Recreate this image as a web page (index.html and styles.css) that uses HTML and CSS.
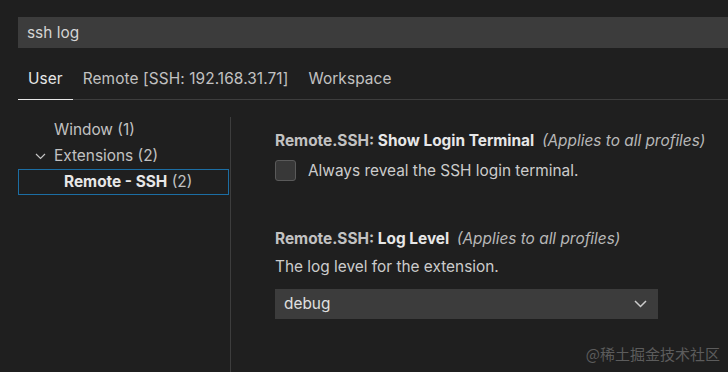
FILE: index.html
```html
<!DOCTYPE html>
<html lang="en">
<head>
<meta charset="UTF-8">
<title>Settings</title>
<link rel="stylesheet" href="styles.css">
</head>
<body>

<div class="search">ssh log</div>

<div class="tabs">
  <div class="tab active">User</div>
  <div class="tab">Remote [SSH: 192.168.31.71]</div>
  <div class="tab">Workspace</div>
</div>

<div class="body">
  <div class="tree">
    <div class="row lvl1">Window (1)</div>
    <div class="row lvl1">
      <svg class="chev" width="11" height="7" viewBox="0 0 11 7"><path d="M1 1l4.5 4.5L10 1" fill="none" stroke="#c5c5c5" stroke-width="1.2"/></svg>
      Extensions (2)
    </div>
    <div class="row lvl2 selected"><b>Remote - SSH</b>&nbsp;(2)</div>
  </div>

  <div class="main">
    <div class="setting">
      <div class="title"><span class="cat">Remote.SSH:</span> Show Login Terminal <i>(Applies to all profiles)</i></div>
      <div class="check-row">
        <span class="checkbox"></span>
        <span>Always reveal the SSH login terminal.</span>
      </div>
    </div>

    <div class="setting second">
      <div class="title"><span class="cat">Remote.SSH:</span> Log Level <i>(Applies to all profiles)</i></div>
      <div class="desc">The log level for the extension.</div>
      <div class="select">
        <span>debug</span>
        <svg width="13" height="8" viewBox="0 0 13 8"><path d="M1 1l5.5 5.5L12 1" fill="none" stroke="#cccccc" stroke-width="1.5"/></svg>
      </div>
    </div>
  </div>
</div>

<div class="mark">@稀土掘金技术社区</div>

</body>
</html>
```

FILE: styles.css
```css
body {
    margin:0;
    background:#1f1f1f;
    color:#cccccc;
    font-family: Inter, "Noto Sans", sans-serif;
    font-size:15.4px;
    line-height:20px;
    height:372px;
    overflow:hidden;
    position:relative;
}

.search {
    margin:17px 0 0 18px;
    height:31px;
    line-height:31px;
    background:#3c3c3c;
    padding-left:9px;
    color:#d4d4d4;
}

.tabs {
    display:flex;
    margin:12px 0 0 18px;
    border-bottom:1px solid #3d3d3d;
    height:39px;
}
.tab {
    padding:0 10px;
    line-height:38px;
    color:#c2c2c2;
    letter-spacing:0.1px;
}
.tab.active {
    color:#e7e7e7;
    border-bottom:1px solid #e7e7e7;
    margin-bottom:-1px;
}

.body {
    display:flex;
    margin-top:17px;
}
.tree {
    width:212px;
    margin-left:18px;
    border-right:1px solid #3d3d3d;
    height:260px;
}
.row {
    height:26px;
    display:flex;
    align-items:center;
    color:#c2c2c2;
    box-sizing:border-box;
}
.lvl1 { padding-left:36px; position:relative; }
.chev { position:absolute; left:17px; top:10px; }
.lvl2 { padding-left:45px; }
.row b { color:#e7e7e7; }
.selected {
    border:1px solid #1c6ea4;
    margin-right:1px;
    padding-left:45px;
}

.main {
    padding-left:44px;
    padding-top:14px;
}
.title {
    font-weight:bold;
    color:#e7e7e7;
}
.title .cat { color:#c2c2c2; }
.title i {
    font-weight:normal;
    color:#b8b8b8;
    margin-left:4px;
}
.check-row {
    display:flex;
    align-items:center;
    margin-top:9px;
}
.checkbox {
    width:21px;
    height:21px;
    background:#383838;
    border:1px solid #5a5a5a;
    border-radius:3px;
    margin-right:12px;
    box-sizing:border-box;
}
.second { margin-top:48px; }
.desc { margin-top:8px; }
.select {
    margin-top:12px;
    width:383px;
    height:30px;
    background:#3c3c3c;
    display:flex;
    align-items:center;
    justify-content:space-between;
    padding:0 11px 0 9px;
    box-sizing:border-box;
    color:#e0e0e0;
}

.mark {
    position:absolute;
    right:8px;
    bottom:8px;
    color:#5c5c5c;
    font-size:15px;
    line-height:20px;
    font-family: "Noto Sans CJK SC", sans-serif;
}
```
